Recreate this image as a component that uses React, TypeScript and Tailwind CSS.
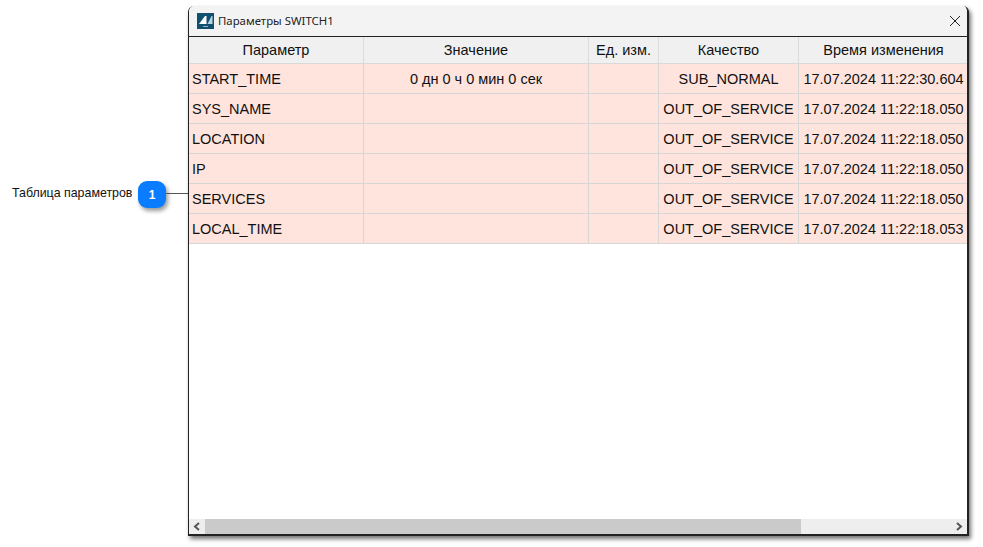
const columns = [
  { title: "Параметр", width: "w-[175px]" },
  { title: "Значение", width: "w-[225px]" },
  { title: "Ед. изм.", width: "w-[70px]" },
  { title: "Качество", width: "w-[140px]" },
  { title: "Время изменения", width: "w-[169px]" },
];

const rows = [
  ["START_TIME", "0 дн 0 ч 0 мин 0 сек", "", "SUB_NORMAL", "17.07.2024 11:22:30.604"],
  ["SYS_NAME", "", "", "OUT_OF_SERVICE", "17.07.2024 11:22:18.050"],
  ["LOCATION", "", "", "OUT_OF_SERVICE", "17.07.2024 11:22:18.050"],
  ["IP", "", "", "OUT_OF_SERVICE", "17.07.2024 11:22:18.050"],
  ["SERVICES", "", "", "OUT_OF_SERVICE", "17.07.2024 11:22:18.050"],
  ["LOCAL_TIME", "", "", "OUT_OF_SERVICE", "17.07.2024 11:22:18.053"],
];

function Callout() {
  return (
    <div className="flex h-[547px] w-[188px] shrink-0 items-start pt-[181px]">
      <span className="ml-[12px] w-[126px] shrink-0 text-[12.4px] leading-[24px] whitespace-nowrap text-[#111]">
        Таблица параметров
      </span>
      <span className="flex h-[27px] w-[28px] shrink-0 items-center justify-center rounded-[9px] bg-[#0a7cff] text-[12px] font-bold text-white shadow-[2px_3px_4px_rgba(0,0,0,0.4)]">
        1
      </span>
      <span className="mt-[12px] h-px w-[22px] shrink-0 bg-[#555]" />
    </div>
  );
}

function AppLogo() {
  return (
    <svg width="17" height="16" viewBox="0 0 17 16" className="shrink-0">
      <rect width="17" height="16" fill="#12506f" />
      <path d="M2 11 L8 3 H9.5 V11 Z" fill="#fff" />
      <path d="M10.5 11 L14.5 3 H15.5 V11 Z" fill="#b8d3e2" />
      <rect x="6" y="13" width="5" height="1" fill="#8fb4c8" />
    </svg>
  );
}

function ScrollBar() {
  return (
    <div className="flex h-[15px] items-stretch bg-[#eeeeee]">
      <div className="flex w-[16px] shrink-0 items-center justify-center">
        <svg width="8" height="9" viewBox="0 0 8 9">
          <path d="M6 1 L2 4.5 L6 8" fill="none" stroke="#555" strokeWidth="2" />
        </svg>
      </div>
      <div className="w-[596px] bg-[#cacaca]" />
      <div className="flex-1" />
      <div className="flex w-[16px] shrink-0 items-center justify-center">
        <svg width="8" height="9" viewBox="0 0 8 9">
          <path d="M2 1 L6 4.5 L2 8" fill="none" stroke="#555" strokeWidth="2" />
        </svg>
      </div>
    </div>
  );
}

export default function App() {
  return (
    <div className="flex h-[547px] w-[983px] overflow-hidden bg-white font-['Liberation_Sans',sans-serif]">
      <Callout />
      <div className="mt-[6px] flex h-[530px] w-[781px] shrink-0 flex-col overflow-hidden rounded-t-[6px] border-r-2 border-b-2 border-l border-[#222] bg-white shadow-[2px_3px_4px_rgba(0,0,0,0.55)]">
        <div className="flex h-[30px] shrink-0 items-center bg-[#f3f3f3] pr-[6px] pl-[8px]">
          <AppLogo />
          <span className="ml-[4px] font-['Noto_Sans',sans-serif] text-[11.4px] text-[#222]">
            Параметры SWITCH1
          </span>
          <svg width="12" height="12" viewBox="0 0 12 12" className="ml-auto">
            <path d="M1 1 L11 11 M11 1 L1 11" stroke="#222" strokeWidth="1" />
          </svg>
        </div>
        <div className="h-px shrink-0 bg-[#222]" />
        <div className="flex-1 text-[14.5px] text-[#111]">
          <div className="flex h-[27px] border-b border-[#d9d9d9] bg-[#f0f0f0]">
            {columns.map((col) => (
              <div
                key={col.title}
                className={`${col.width} flex shrink-0 items-center justify-center border-r border-[#dcdcdc] pt-[2px] last:border-r-0`}
              >
                {col.title}
              </div>
            ))}
          </div>
          {rows.map((row) => (
            <div key={row[0]} className="flex h-[30px] border-b border-[#d6d6d6] bg-[#ffe4de]">
              {row.map((cell, i) => (
                <div
                  key={i}
                  className={`${columns[i].width} flex shrink-0 items-center overflow-hidden border-r border-[#d6d6d6] pt-[2px] whitespace-nowrap last:border-r-0 ${
                    i === 0 ? "pl-[3px]" : "justify-center"
                  }`}
                >
                  {cell}
                </div>
              ))}
            </div>
          ))}
        </div>
        <ScrollBar />
      </div>
    </div>
  );
}
